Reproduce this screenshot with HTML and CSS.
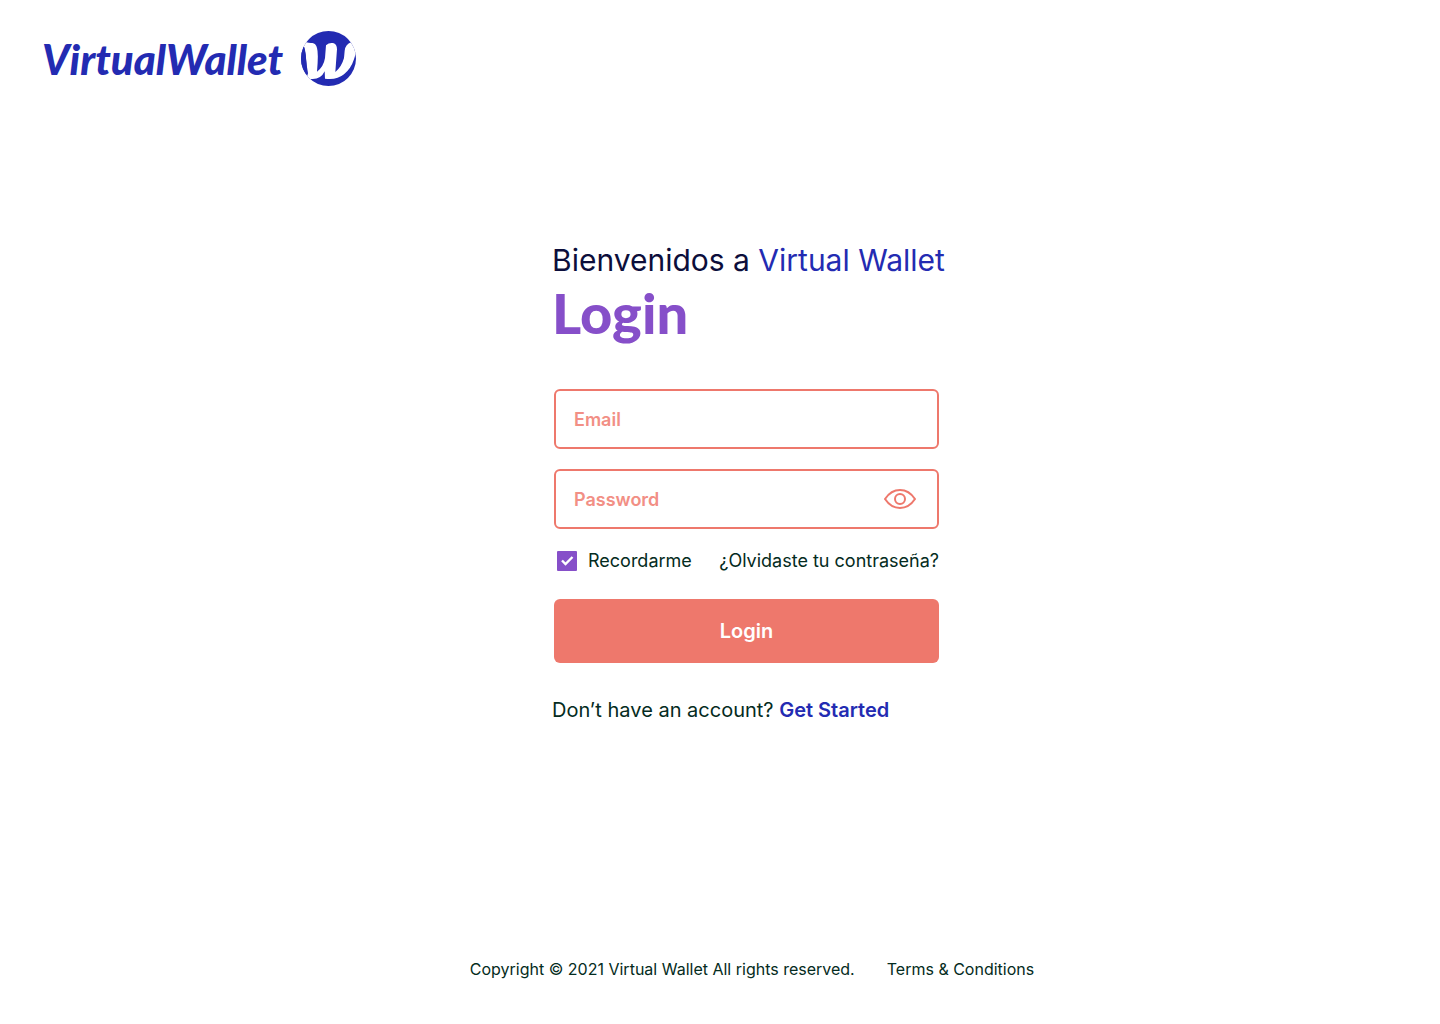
FILE: index.html
```html
<!DOCTYPE html>
<html lang="es">
<head>
<meta charset="utf-8">
<meta name="viewport" content="width=device-width, initial-scale=1">
<title>Virtual Wallet – Login</title>
<link rel="stylesheet" href="styles.css">
</head>
<body>
<header class="header">
  <a class="brand" href="#">
    <span class="brand-name">VirtualWallet</span>
    <svg class="brand-mark" viewBox="36 33 165 165" aria-hidden="true">
      <defs><clipPath id="disc"><circle cx="118.500" cy="115.500" r="82.500"/></clipPath></defs>
      <g clip-path="url(#disc)">
        <path class="mark-blue" d="M36 33H201V198H36Z"/>
        <path class="mark-white" d="M30 62L52 67Q62 70 70 69Q81 70 84 84Q89 100 84 155Q104 140 108 114L111 76Q120 67 132 69Q144 72 144 88L139 156Q158 140 165 114L167 92Q170 72 186 67L210 60V85Q200 99 195 118Q186 146 165 163Q143 181 108 176L107 154Q95 180 65 177H52L57 160Q53 140 51 114Q49 86 44 78L38 90L30 100Z"/>
        <path class="mark-blue" d="M43 77Q47 84 50 106L55 162L36 158V96Z"/>
      </g>
    </svg>
  </a>
</header>
<main class="main">
  <div class="login">
    <p class="welcome">Bienvenidos a <span class="welcome-brand">Virtual Wallet</span></p>
    <h1 class="title">Login</h1>
    <form class="form">
      <input class="field" type="email" aria-label="Email" placeholder="Email">
      <div class="password">
        <input class="field" type="password" aria-label="Password" placeholder="Password">
        <button class="reveal" type="button" aria-label="Mostrar contraseña">
          <svg class="eye" viewBox="0 0 32 20" aria-hidden="true">
            <path d="M1 10C5 4 10 1 16 1S27 4 31 10C27 16 22 19 16 19S5 16 1 10Z"/>
            <circle cx="16" cy="10" r="5"/>
          </svg>
        </button>
      </div>
      <div class="options">
        <label class="remember"><input class="check" type="checkbox" checked>Recordarme</label>
        <a class="link" href="#">¿Olvidaste tu contraseña?</a>
      </div>
      <button class="submit" type="submit">Login</button>
    </form>
    <p class="signup">Don’t have an account? <a class="signup-link" href="#">Get Started</a></p>
  </div>
</main>
<footer class="footer">
  <span>Copyright © 2021 Virtual Wallet All rights reserved.</span>
  <a class="link" href="#">Terms &amp; Conditions</a>
</footer>
</body>
</html>
```
FILE: styles.css
```css
* { box-sizing: border-box; }

body {
  margin: 0;
  min-height: 100vh;
  display: flex;
  flex-direction: column;
  background: #fff;
  color: #042b21;
  font-family: Inter, "Liberation Sans", sans-serif;
}

a { color: inherit; text-decoration: none; }

.header { padding: 31px 42px 0; }

.brand {
  display: inline-flex;
  align-items: center;
  gap: 18px;
  color: #232bb2;
}

.brand-name {
  padding-top: 2px;
  font: italic 900 42px/53px Lato, sans-serif;
}

.brand-mark { width: 55px; height: 55px; }
.mark-blue { fill: #232bb2; }
.mark-white { fill: #fff; }

.main {
  flex: 1;
  display: flex;
  justify-content: center;
  padding: 154px 24px 48px;
}

/* The form sits slightly right of the page centre. */
.login {
  width: 100%;
  max-width: 387px;
  margin-left: 51px;
}

.welcome {
  margin: 0;
  color: #0c0e3b;
  font-size: 30px;
  line-height: 40px;
  white-space: nowrap;
}

.welcome-brand { color: #232bb2; }

.title {
  margin: 0 0 43px;
  color: #864fc9;
  font: 900 56px/66px Lato, sans-serif;
}

.form {
  display: flex;
  flex-direction: column;
  gap: 20px;
  padding-left: 2px;
}

.field {
  display: block;
  width: 100%;
  height: 60px;
  padding: 0 18px;
  border: 2px solid #ee786c;
  border-radius: 6px;
  background: #fff;
  color: #ee786c;
  font: 600 18px/24px Inter, sans-serif;
}

.field::placeholder { color: #f28f85; opacity: 1; }

.password { position: relative; }
.password .field { padding-right: 64px; }

.reveal {
  position: absolute;
  top: 0;
  right: 23px;
  height: 60px;
  padding: 0;
  border: 0;
  background: none;
  cursor: pointer;
}

.eye {
  display: block;
  width: 32px;
  height: 20px;
  fill: none;
  stroke: #ee786c;
  stroke-width: 2;
  stroke-linejoin: round;
}

.options {
  display: flex;
  justify-content: space-between;
  align-items: center;
  padding-left: 3px;
  margin-bottom: 6px;
  font-size: 18px;
  line-height: 24px;
  white-space: nowrap;
}

.remember { display: flex; align-items: center; gap: 11px; }

.check {
  appearance: none;
  width: 20px;
  height: 20px;
  margin: 0;
  border-radius: 1px;
  background: #864fc9;
}

.check:checked {
  background: #864fc9 url("data:image/svg+xml,%3Csvg xmlns='http://www.w3.org/2000/svg' viewBox='0 0 20 20'%3E%3Cpath d='M5 9.500l3.500 3.500 7-7' fill='none' stroke='white' stroke-width='2.400'/%3E%3C/svg%3E");
}

.submit {
  height: 64px;
  border: 0;
  border-radius: 6px;
  background: #ee786c;
  color: #fff;
  font: 600 20px/24px Inter, sans-serif;
  cursor: pointer;
}

.signup {
  margin: 35px 0 0;
  font-size: 20px;
  line-height: 24px;
  white-space: nowrap;
}

.signup-link { color: #232bb2; font-weight: 600; }

.footer {
  display: flex;
  flex-wrap: wrap;
  justify-content: center;
  gap: 8px 32px;
  padding: 0 24px 43px 88px;
  font-size: 16px;
  line-height: 24px;
}
```
